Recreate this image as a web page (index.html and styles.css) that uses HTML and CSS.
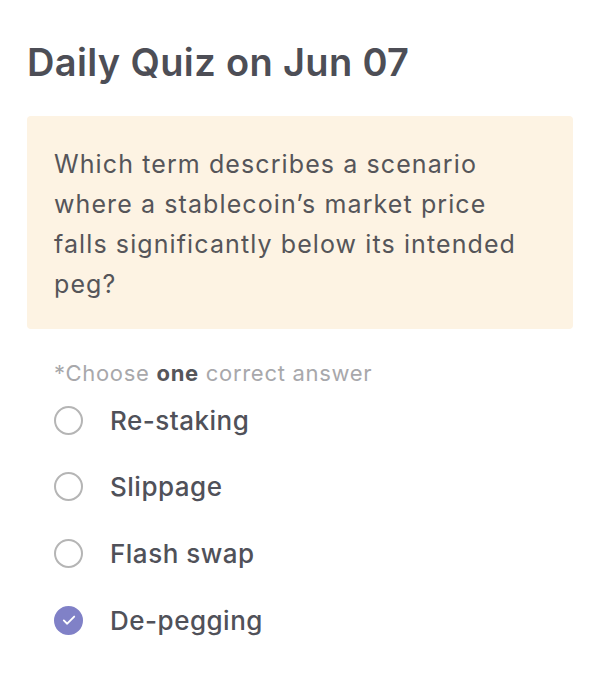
FILE: index.html
```html
<!DOCTYPE html>
<html lang="en">
<head>
<meta charset="utf-8">
<link rel="stylesheet" href="styles.css">
</head>
<body>
<main class="quiz">
  <h1 class="title">Daily Quiz on Jun 07</h1>
  <div class="question">Which term describes a scenario<br>where a stablecoin’s market price<br>falls significantly below its intended<br>peg?</div>
  <p class="hint">*Choose <b>one</b> correct answer</p>
  <ul class="options">
    <li class="option"><span class="radio"></span><span class="label">Re-staking</span></li>
    <li class="option"><span class="radio"></span><span class="label">Slippage</span></li>
    <li class="option"><span class="radio"></span><span class="label">Flash swap</span></li>
    <li class="option"><span class="radio checked"><svg viewBox="0 0 14 14" width="14" height="14"><path d="M1.8 7.4l3.4 3.3L12.2 3.6" fill="none" stroke="#fff" stroke-width="1.9" stroke-linecap="round" stroke-linejoin="round"/></svg></span><span class="label">De-pegging</span></li>
  </ul>
</main>
</body>
</html>
```
FILE: styles.css
```css
* { box-sizing: border-box; }
html, body { margin: 0; padding: 0; background: #fff; }
body { font-family: Inter, "Noto Sans", sans-serif; color: #4f5058; }
.quiz { padding: 39px 27px 0 27px; display: flex; flex-direction: column; }
.title { margin: 0; font-size: 38px; line-height: 46px; font-weight: 600; color: #4d4e56; letter-spacing: 0.35px; }
.question { margin-top: 31px; background: #fdf3e3; border-radius: 4px; padding: 28px 20px 25px 27px; font-size: 25px; line-height: 40px; color: #555559; letter-spacing: 1.1px; }
.hint { margin: 30px 0 0 27px; font-size: 22px; line-height: 28px; color: #a8a8ab; letter-spacing: 0.7px; }
.hint b { color: #55565b; font-weight: 700; }
.options { list-style: none; margin: 0 0 0 27px; padding: 0; display: flex; flex-direction: column; }
.option { height: 66.67px; display: flex; align-items: center; gap: 27px; }
.radio { width: 29px; height: 29px; border-radius: 50%; border: 2px solid #b5b5b5; flex: none; display: flex; align-items: center; justify-content: center; }
.radio.checked { background: #8081c7; border-color: #8081c7; }
.label { font-size: 26px; font-weight: 500; color: #505159; letter-spacing: 0.5px; }
```
